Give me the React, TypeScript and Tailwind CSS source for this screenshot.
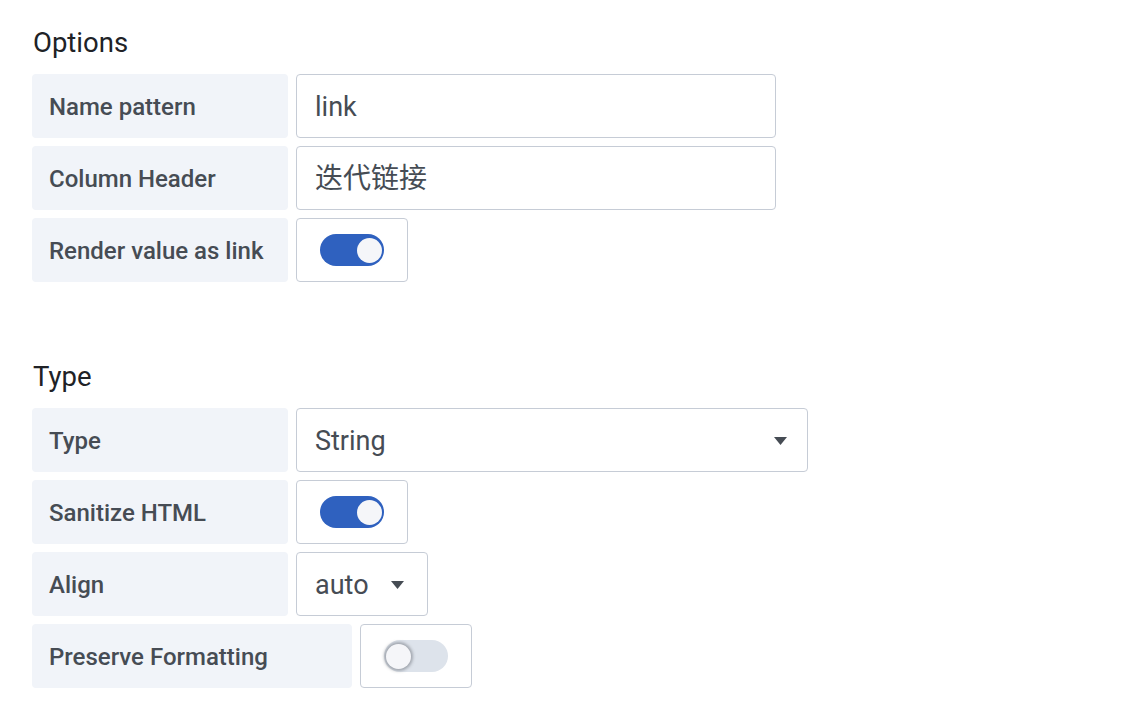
import React from 'react'

const font = { fontFamily: 'Roboto, "Noto Sans CJK SC", sans-serif' }

function Label({ children, wide }: { children: React.ReactNode; wide?: boolean }) {
  return (
    <div
      className={`${wide ? 'w-[320px]' : 'w-[256px]'} h-[64px] shrink-0 flex items-center pl-[17px] pt-px rounded-[4px] bg-[#f1f4f9] text-[#464c54] text-[24px] font-medium`}
    >
      {children}
    </div>
  )
}

function Switch({ on }: { on: boolean }) {
  return (
    <div className="w-[112px] h-[64px] shrink-0 flex items-center justify-center rounded-[4px] border border-[#c6ccd6] bg-white">
      <div
        className={`w-[64px] h-[32px] rounded-full flex items-center px-[2px] ${on ? 'bg-[#2f61bf] justify-end' : 'bg-[#dde3eb] justify-start'}`}
      >
        <div
          className={`w-[25px] h-[25px] rounded-full bg-[#f5f6f9] ${on ? '' : 'shadow-[0_0_3px_2px_rgba(90,95,105,0.45)]'}`}
        />
      </div>
    </div>
  )
}

function Caret() {
  return (
    <svg width="13" height="8" viewBox="0 0 13 8" className="shrink-0">
      <path d="M0 0h13L6.5 8z" fill="#464c54" />
    </svg>
  )
}

function Row({ children }: { children: React.ReactNode }) {
  return <div className="flex gap-[8px]">{children}</div>
}

export default function App() {
  return (
    <div className="min-h-screen bg-white pl-[32px] pt-[26px]" style={font}>
      <h2 className="text-[27.5px] leading-[34px] text-[#202226] pl-px mb-[14px]">Options</h2>
      <div className="flex flex-col gap-[8px]">
        <Row>
          <Label>Name pattern</Label>
          <div className="w-[480px] h-[64px] flex items-center pl-[18px] pt-[2px] rounded-[4px] border border-[#c6ccd6] text-[27px] text-[#464c54]">
            link
          </div>
        </Row>
        <Row>
          <Label>Column Header</Label>
          <div className="w-[480px] h-[64px] flex items-center pl-[18px] pt-px rounded-[4px] border border-[#c6ccd6] text-[28px] text-[#464c54]">
            迭代链接
          </div>
        </Row>
        <Row>
          <Label>Render value as link</Label>
          <Switch on />
        </Row>
      </div>

      <h2 className="text-[27.5px] leading-[34px] text-[#202226] pl-px mt-[78px] mb-[14px]">Type</h2>
      <div className="flex flex-col gap-[8px]">
        <Row>
          <Label>Type</Label>
          <div className="w-[512px] h-[64px] flex items-center justify-between pl-[18px] pt-[2px] pr-[20px] rounded-[4px] border border-[#c6ccd6] text-[27px] text-[#464c54]">
            <span>String</span>
            <Caret />
          </div>
        </Row>
        <Row>
          <Label>Sanitize HTML</Label>
          <Switch on />
        </Row>
        <Row>
          <Label>Align</Label>
          <div className="w-[132px] h-[64px] flex items-center gap-[22px] pl-[18px] pt-[2px] rounded-[4px] border border-[#c6ccd6] text-[27px] text-[#464c54]">
            <span>auto</span>
            <Caret />
          </div>
        </Row>
        <Row>
          <Label wide>Preserve Formatting</Label>
          <Switch on={false} />
        </Row>
      </div>
    </div>
  )
}
